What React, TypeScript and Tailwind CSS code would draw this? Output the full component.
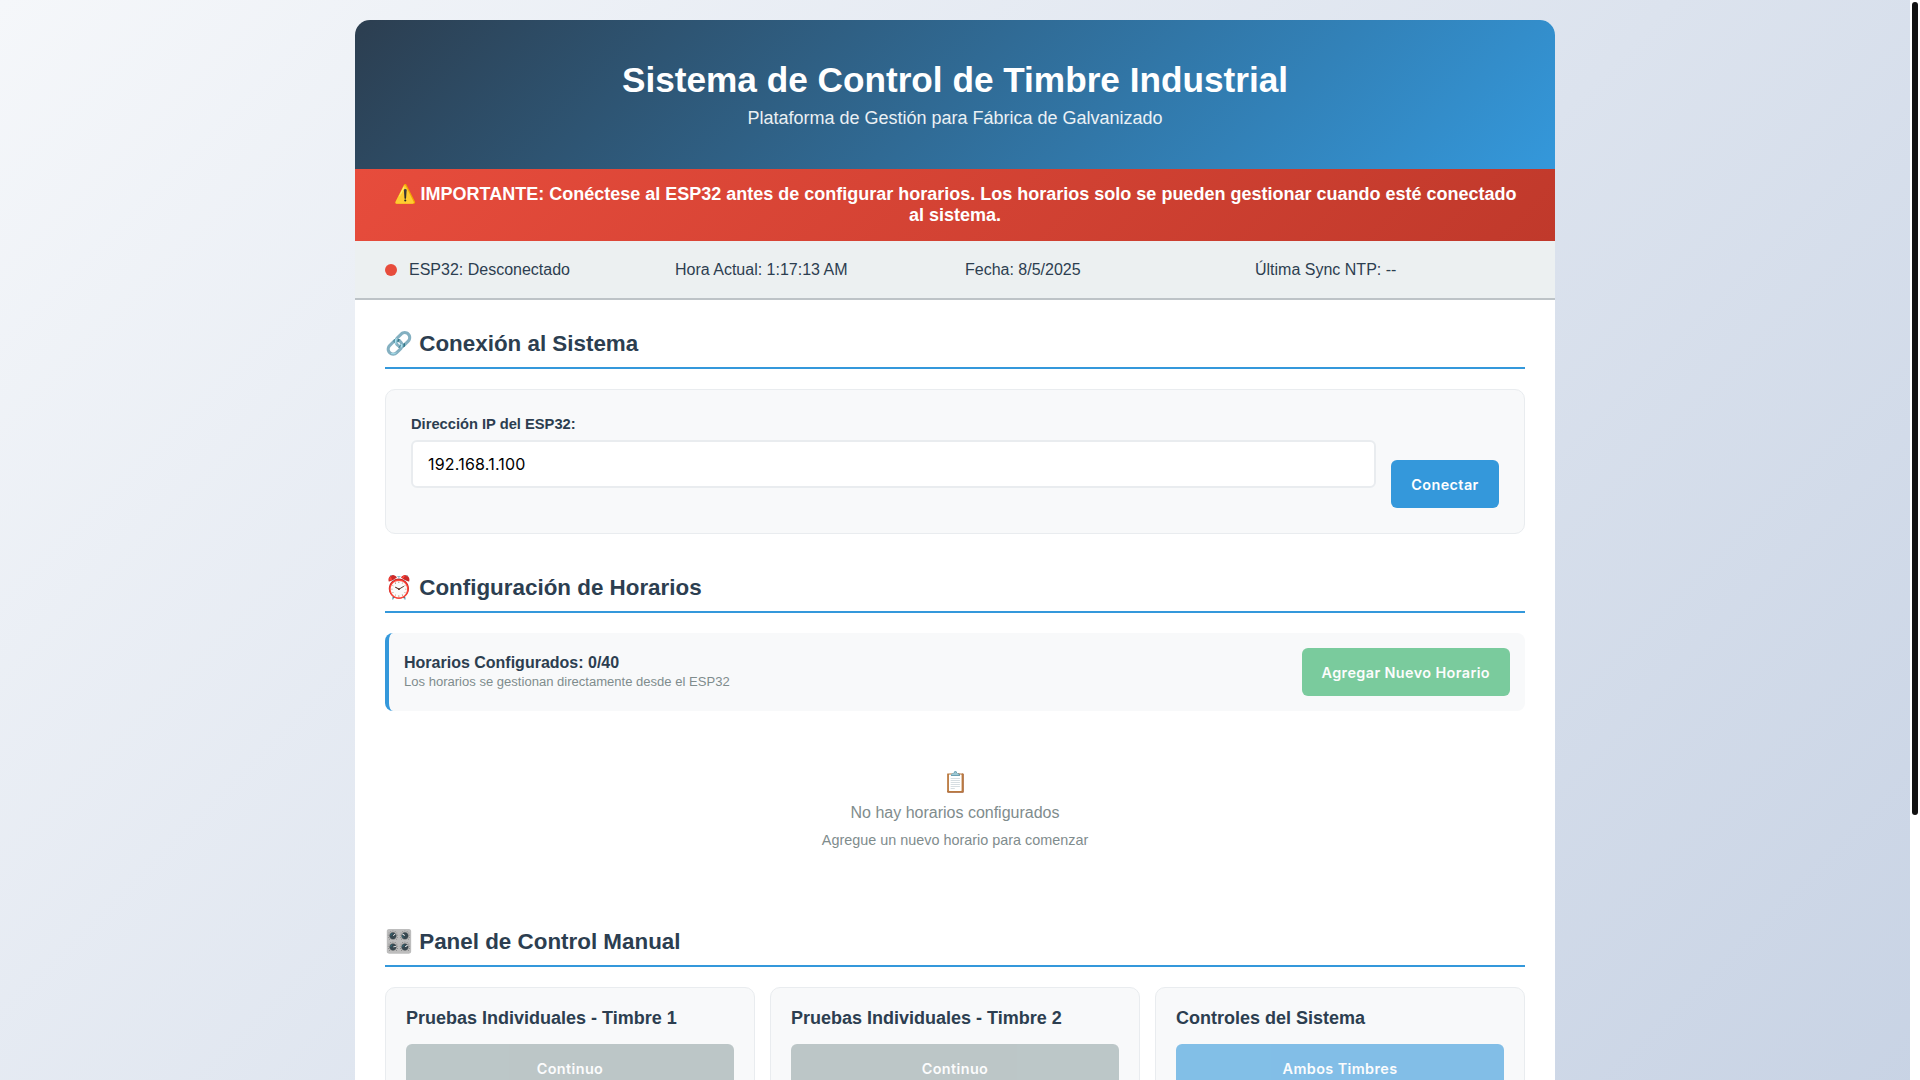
const sans = "font-['Liberation_Sans',Arial,sans-serif]";
const inter = "font-['Inter',sans-serif]";

function SectionTitle({ emoji, children }: { emoji: string; children: React.ReactNode }) {
  return (
    <h2 className="mb-5 border-b-2 border-[#3498db] pb-2.5 text-[22.4px] leading-[27px] font-bold text-[#2c3e50]">
      {emoji} {children}
    </h2>
  );
}

function ControlCard({ title, label, color }: { title: string; label: string; color: string }) {
  return (
    <div className="min-h-[394px] rounded-[10px] border border-[#e9ecef] bg-[#f8f9fa] p-5">
      <h3 className="mb-[15px] text-[18px] leading-[21px] font-bold text-[#2c3e50]">{title}</h3>
      <button className={`h-12 w-full rounded-md px-5 pt-0.5 text-[14.4px] font-semibold tracking-[0.4px] text-white opacity-60 ${inter} ${color}`}>
        {label}
      </button>
    </div>
  );
}

export default function App() {
  return (
    <>
      <div className={`mr-2.5 min-h-screen bg-[linear-gradient(135deg,#f5f7fa_0%,#c3cfe2_100%)] p-5 ${sans}`}>
        <div className="mx-auto max-w-[1200px] overflow-hidden rounded-[15px] bg-white">
          <header className="bg-[linear-gradient(135deg,#2c3e50_0%,#3498db_100%)] px-[30px] pt-10 pb-10 text-center text-white">
            <h1 className="mb-2 text-[35.2px] leading-[40px] font-bold">Sistema de Control de Timbre Industrial</h1>
            <p className="text-[18px] leading-[21px] opacity-90">Plataforma de Gestión para Fábrica de Galvanizado</p>
          </header>

          <div className="bg-[linear-gradient(135deg,#e74c3c_0%,#c0392b_100%)] px-[30px] py-[15px] text-center text-[18px] leading-[21px] font-bold text-white">
            ⚠️ IMPORTANTE: Conéctese al ESP32 antes de configurar horarios. Los horarios solo se pueden gestionar cuando esté conectado al sistema.
          </div>

          <div className="grid grid-cols-4 gap-5 border-b-2 border-[#bdc3c7] bg-[#ecf0f1] px-[30px] py-5 text-[16px] leading-[17px] text-[#2c3e50]">
            <div className="flex items-center">
              <span className="mr-3 h-3 w-3 rounded-full bg-[#e74c3c]" />
              ESP32: Desconectado
            </div>
            <div>Hora Actual: 1:17:13 AM</div>
            <div>Fecha: 8/5/2025</div>
            <div>Última Sync NTP: --</div>
          </div>

          <main className="p-[30px]">
            <section className="mb-10">
              <SectionTitle emoji="🔗">Conexión al Sistema</SectionTitle>
              <div className="flex items-end gap-[15px] rounded-[10px] border border-[#e9ecef] bg-[#f8f9fa] p-[25px]">
                <div className="mb-5 flex-1">
                  <label className="mb-[7px] block text-[14.7px] leading-[18px] font-bold text-[#2c3e50]">Dirección IP del ESP32:</label>
                  <input
                    readOnly
                    value="192.168.1.100"
                    className={`block h-[47.5px] w-full rounded-md border-2 border-[#e9ecef] bg-white px-[15px] text-[16px] tracking-[0.2px] text-black outline-none ${inter}`}
                  />
                </div>
                <button className={`h-12 w-[108px] rounded-md bg-[#3498db] pt-0.5 text-[14.4px] font-semibold tracking-[0.4px] text-white ${inter}`}>Conectar</button>
              </div>
            </section>

            <section className="mb-5">
              <SectionTitle emoji="⏰">Configuración de Horarios</SectionTitle>
              <div className="flex items-center justify-between rounded-lg border-l-4 border-[#3498db] bg-[#f8f9fa] p-[15px]">
                <div>
                  <div className="mb-0.5 text-[16px] leading-[18px] font-bold text-[#2c3e50]">Horarios Configurados: 0/40</div>
                  <div className="text-[13.05px] leading-[15px] text-[#7f8c8d]">Los horarios se gestionan directamente desde el ESP32</div>
                </div>
                <button className={`h-12 rounded-md bg-[#27ae60] px-5 pt-0.5 text-[14.4px] font-semibold tracking-[0.4px] text-white opacity-60 ${inter}`}>Agregar Nuevo Horario</button>
              </div>
              <div className="pt-[60px] pb-[59px] text-center text-[#7f8c8d]">
                <div className="mb-2.5 text-[20px] leading-[23px]">📋</div>
                <p className="mb-[10px] text-[16px] leading-[18px]">No hay horarios configurados</p>
                <p className="text-[14.4px] leading-[17px]">Agregue un nuevo horario para comenzar</p>
              </div>
            </section>

            <section>
              <SectionTitle emoji="🎛️">Panel de Control Manual</SectionTitle>
              <div className="grid grid-cols-3 gap-[15px]">
                <ControlCard title="Pruebas Individuales - Timbre 1" label="Continuo" color="bg-[#95a5a6]" />
                <ControlCard title="Pruebas Individuales - Timbre 2" label="Continuo" color="bg-[#95a5a6]" />
                <ControlCard title="Controles del Sistema" label="Ambos Timbres" color="bg-[#3498db]" />
              </div>
            </section>
          </main>
        </div>
      </div>
      <div className="fixed top-0 right-0 h-screen w-2.5 bg-white px-0.5 pt-0.5">
        <div className="h-[813px] rounded-[3px] bg-[#111]" />
      </div>
    </>
  );
}
